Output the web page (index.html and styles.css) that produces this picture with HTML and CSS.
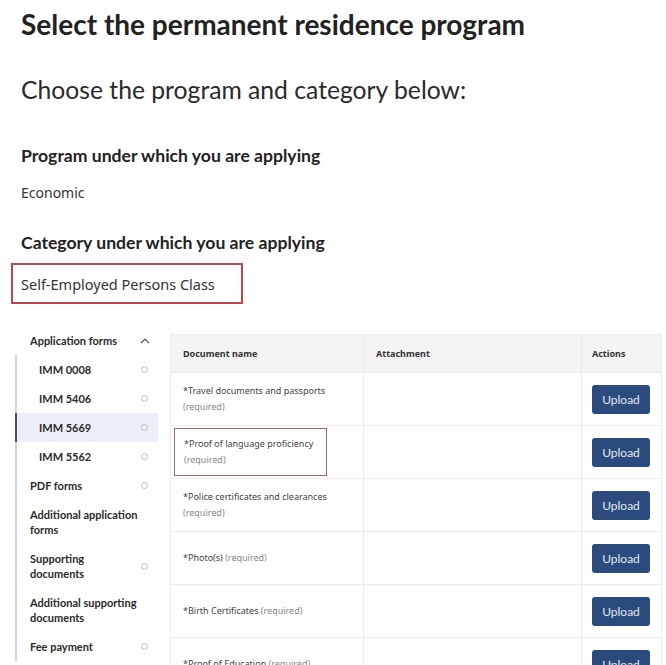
FILE: index.html
```html
<!DOCTYPE html>
<html lang="en">
<head>
<meta charset="utf-8">
<title>Select the permanent residence program</title>
<link rel="stylesheet" href="styles.css">
</head>
<body>
<main class="page">
  <h1 class="title">Select the permanent residence program</h1>
  <h2 class="subtitle">Choose the program and category below:</h2>

  <h3 class="label label-program">Program under which you are applying</h3>
  <p class="value">Economic</p>

  <h3 class="label label-category">Category under which you are applying</h3>
  <div class="value-box">Self-Employed Persons Class</div>

  <section class="workspace">
    <nav class="sidebar">
      <div class="nav-item nav-head">
        <span>Application forms</span>
        <svg class="chev" width="10" height="6" viewBox="0 0 10 6"><path d="M1 5 L5 1 L9 5" fill="none" stroke="#555" stroke-width="1.2"/></svg>
      </div>
      <div class="nav-tree">
        <div class="nav-item sub"><span>IMM 0008</span><i class="dot"></i></div>
        <div class="nav-item sub"><span>IMM 5406</span><i class="dot"></i></div>
        <div class="nav-item sub active"><span>IMM 5669</span><i class="dot"></i></div>
        <div class="nav-item sub"><span>IMM 5562</span><i class="dot"></i></div>
        <div class="nav-item"><span>PDF forms</span><i class="dot"></i></div>
        <div class="nav-item"><span>Additional application<br>forms</span></div>
        <div class="nav-item"><span>Supporting<br>documents</span><i class="dot"></i></div>
        <div class="nav-item"><span>Additional supporting<br>documents</span></div>
        <div class="nav-item"><span>Fee payment</span><i class="dot"></i></div>
      </div>
    </nav>

    <table class="docs">
      <thead>
        <tr><th class="c-name">Document name</th><th class="c-att">Attachment</th><th class="c-act">Actions</th></tr>
      </thead>
      <tbody>
        <tr><td class="c-name">*Travel documents and passports<br><span class="req">(required)</span></td><td></td><td class="c-act"><button class="upload">Upload</button></td></tr>
        <tr><td class="c-name boxed-cell"><div class="boxed">*Proof of language proficiency<br><span class="req">(required)</span></div></td><td></td><td class="c-act"><button class="upload">Upload</button></td></tr>
        <tr><td class="c-name">*Police certificates and clearances<br><span class="req">(required)</span></td><td></td><td class="c-act"><button class="upload">Upload</button></td></tr>
        <tr><td class="c-name">*Photo(s) <span class="req">(required)</span></td><td></td><td class="c-act"><button class="upload">Upload</button></td></tr>
        <tr><td class="c-name">*Birth Certificates <span class="req">(required)</span></td><td></td><td class="c-act"><button class="upload">Upload</button></td></tr>
        <tr><td class="c-name">*Proof of Education <span class="req">(required)</span></td><td></td><td class="c-act"><button class="upload">Upload</button></td></tr>
      </tbody>
    </table>
  </section>
</main>
</body>
</html>
```

FILE: styles.css
```css
html, body {
  margin: 0;
  padding: 0;
  background: #fff;
  overflow: hidden;
}
body {
  font-family: Lato, "Noto Sans", sans-serif;
  color: #222;
}
.page {
  padding: 8px 0 0 21px;
  height: 657px;
  overflow: hidden;
}
.title {
  margin: 0;
  font-size: 28px;
  line-height: 32px;
  font-weight: 700;
  color: #222;
}
.subtitle {
  margin: 35px 0 0;
  font-size: 24.7px;
  line-height: 30px;
  font-weight: 400;
  color: #2a2a2a;
}
.label {
  margin: 0;
  font-size: 17.6px;
  line-height: 22px;
  font-weight: 700;
  color: #222;
}
.label-program { margin-top: 40px; }
.label-category { margin-top: 29px; }
.value {
  margin: 16px 0 0;
  font-family: "Noto Sans", sans-serif;
  font-size: 14px;
  line-height: 20px;
  color: #333;
}
.value-box {
  margin: 9px 0 0 -10px;
  width: 220px;
  height: 37px;
  border: 2px solid #b8484c;
  padding-left: 8px;
  display: flex;
  align-items: center;
  font-family: "Noto Sans", sans-serif;
  font-size: 14.5px;
  color: #333;
  box-sizing: content-box;
}
.workspace {
  margin: 28px 0 0 -21px;
  display: flex;
  align-items: flex-start;
  gap: 12px;
}
.sidebar {
  width: 158px;
  flex: none;
  margin-top: -6px;
}
.nav-item {
  display: flex;
  align-items: center;
  justify-content: space-between;
  padding: 7px 8px 7px 13px;
  font-size: 11px;
  line-height: 15px;
  font-weight: 700;
  color: #2a2a2a;
}
.nav-head {
  padding-left: 30px;
  padding-right: 8px;
}
.chev { margin-right: 0; }
.nav-tree {
  margin-left: 15px;
  border-left: 2px solid #d4d4d4;
}
.nav-item.sub { padding-left: 22px; }
.nav-item.active {
  background: #eceff7;
  margin-left: -2px;
  border-left: 2px solid #4a4f5c;
}
.dot {
  width: 5px;
  height: 5px;
  border: 1px solid #bbb;
  border-radius: 50%;
  flex: none;
  margin-right: 2px;
}
.docs {
  width: 492px;
  border-collapse: collapse;
  table-layout: fixed;
  font-family: "Noto Sans", sans-serif;
  font-size: 9px;
  color: #444;
  margin-top: 2px;
}
.docs th {
  background: #f4f4f5;
  height: 37px;
  text-align: left;
  font-weight: 700;
  color: #333;
  padding: 0 12px;
  border: 1px solid #ececec;
}
.docs td {
  height: 52px;
  padding: 0 12px;
  border: 1px solid #ececec;
  vertical-align: middle;
  line-height: 16px;
}
.docs .c-name { width: 168px; }
.docs .c-act { width: 59px; padding: 0 10px; }
.req { color: #888; }
.docs td.boxed-cell { padding: 0 3px; }
.boxed {
  width: 133px;
  padding: 7px 9px;
  border: 1px solid #a56a66;
}
.upload {
  width: 58px;
  height: 29px;
  border: 0;
  border-radius: 3px;
  background: #2b4a7d;
  color: #e3e8f1;
  font-family: Lato, sans-serif;
  font-size: 12px;
  padding: 0;
}
```
